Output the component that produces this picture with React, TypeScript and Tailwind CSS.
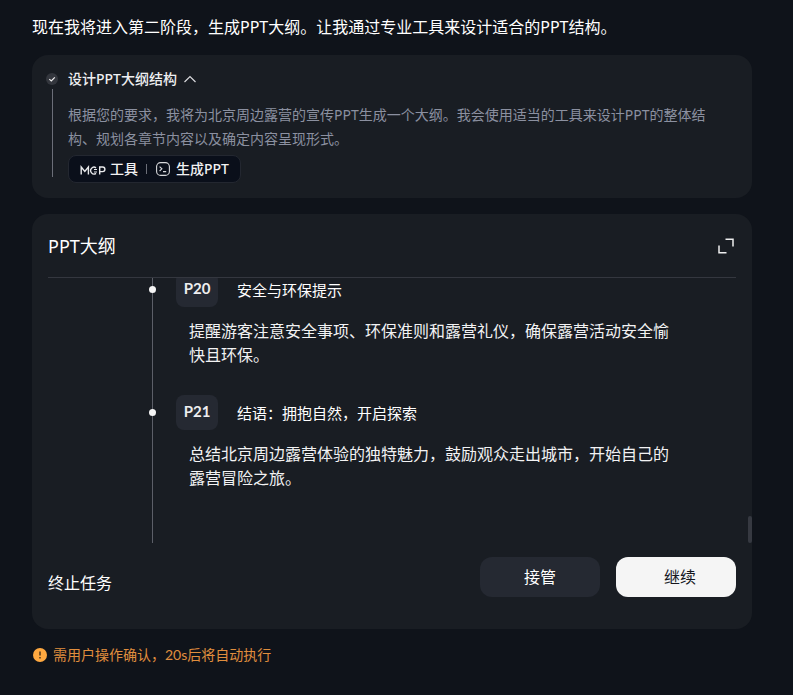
import React from "react";

type OutlinePage = { page: string; title: string; body: string };

const pages: OutlinePage[] = [
  {
    page: "P20",
    title: "安全与环保提示",
    body: "提醒游客注意安全事项、环保准则和露营礼仪，确保露营活动安全愉快且环保。",
  },
  {
    page: "P21",
    title: "结语：拥抱自然，开启探索",
    body: "总结北京周边露营体验的独特魅力，鼓励观众走出城市，开始自己的露营冒险之旅。",
  },
];

function McpLogo() {
  return (
    <svg width="26" height="10" viewBox="0 0 26 10" fill="none" stroke="#e8e9eb" strokeWidth="1.4" aria-label="MCP">
      <path d="M1.2 9.5V2L4.8 6.5L8.4 2V9.5" />
      <path d="M16 2.8A3.4 3.4 0 1 0 16 8.4" />
      <path d="M14 4.5H17M14 7H17" strokeWidth="1" />
      <path d="M19.7 9.5V2H22.6A2.1 2.1 0 0 1 22.6 6.6H19.7" />
    </svg>
  );
}

function StepCard() {
  return (
    <section className="flex gap-2.5 rounded-2xl bg-[#191d23] pt-3 pr-8 pb-[15px] pl-3.5">
      <div className="flex w-3 flex-col items-center pt-1.5">
        <svg className="shrink-0" width="12" height="12" viewBox="0 0 12 12" fill="none">
          <circle cx="6" cy="6" r="6" fill="#33363d" />
          <path d="M3.3 6.1L5.3 8L8.8 4.4" stroke="#f0f0f0" strokeWidth="1.2" />
        </svg>
        <div className="mt-1 mb-1.5 w-px flex-1 bg-[#6b6e78]" />
      </div>
      <div className="min-w-0 flex-1">
        <button type="button" className="flex h-6 items-center gap-1.5 text-sm leading-6 font-medium text-[#eeeff1]">
          设计PPT大纲结构
          <svg width="14" height="8" viewBox="0 0 14 8" fill="none" stroke="#d8d9dc" strokeWidth="1.2">
            <path d="M1.5 7L7 1.5L12.5 7" />
          </svg>
        </button>
        <p className="mt-3 text-sm leading-6 text-[#8b90a0]">
          根据您的要求，我将为北京周边露营的宣传PPT生成一个大纲。我会使用适当的工具来设计PPT的整体结构、规划各章节内容以及确定内容呈现形式。
        </p>
        <div className="mt-1 flex h-7 w-fit items-center rounded-lg border border-[#232730] bg-[#0a0f1a] px-[11px] text-sm font-medium text-[#f2f2f3]">
          <span className="pt-0.5">
            <McpLogo />
          </span>
          <span className="ml-1">工具</span>
          <span className="mx-2 h-2.5 w-px bg-[#6b6e78]" />
          <svg className="ml-px" width="14" height="14" viewBox="0 0 14 14" fill="none" stroke="#d8d9dc" strokeWidth="1.1">
            <rect x="0.6" y="0.6" width="12.8" height="12.8" rx="4" />
            <path d="M3.6 4.6L5.9 6.8L3.6 9M7 9.6H10.2" />
          </svg>
          <span className="ml-1.5">生成PPT</span>
        </div>
      </div>
    </section>
  );
}

function OutlineItem({ item }: { item: OutlinePage }) {
  return (
    <li className="flex">
      <div className="flex h-[35px] w-[7px] shrink-0 items-center">
        <span className="size-[7px] rounded-full bg-[#f5f5f5]" />
      </div>
      <div className="ml-5 min-w-0">
        <div className="flex items-center gap-[19px]">
          <span className="flex h-[35px] w-[42px] items-center justify-center rounded-lg bg-[#252932] pb-0.5 font-[Lato,'Noto_Sans_CJK_SC',sans-serif] text-[15px] font-bold text-[#eeeeef]">
            {item.page}
          </span>
          <h3 className="text-[15px] leading-6 text-white">{item.title}</h3>
        </div>
        <p className="mt-3 pl-[13px] text-base leading-6 text-[#f2f2f3]">{item.body}</p>
      </div>
    </li>
  );
}

function OutlineCard() {
  return (
    <section className="relative rounded-2xl bg-[#191d23] px-4 pb-8">
      <header className="flex h-16 items-center justify-between border-b border-[#34373f]">
        <h2 className="text-lg text-white">PPT大纲</h2>
        <button type="button" aria-label="展开" className="mr-0.5">
          <svg width="16" height="16" viewBox="0 0 16 16" fill="none" stroke="#eeeeef" strokeWidth="1.5">
            <path d="M7.5 1.2H15V8.5M1 7.5V14.8H8.5" />
          </svg>
        </button>
      </header>
      <div className="relative flex h-[265px] flex-col justify-end overflow-hidden">
        <div className="absolute inset-y-0 left-[104px] w-px bg-[#5c5f68]" />
        <ul className="relative flex flex-col gap-7 pr-[60px] pb-[53px] pl-[101px]">
          {pages.map((item) => (
            <OutlineItem key={item.page} item={item} />
          ))}
        </ul>
      </div>
      <div className="absolute top-[302px] right-0 h-[27px] w-1 rounded-sm bg-[#363941]" />
      <footer className="mt-3.5 flex h-10 items-center gap-4">
        <button type="button" className="mt-3 mr-auto text-base text-white">
          终止任务
        </button>
        <button type="button" className="h-10 w-[120px] rounded-xl bg-[#252932] text-base text-white">
          接管
        </button>
        <button type="button" className="h-10 w-[120px] rounded-xl bg-[#f5f5f5] pl-2 text-base text-[#14171e]">
          继续
        </button>
      </footer>
    </section>
  );
}

export default function App() {
  return (
    <main className="flex min-h-screen flex-col gap-4 bg-[#0f131a] pt-[15px] pr-[41px] pl-8 font-['Noto_Sans','Noto_Sans_CJK_SC',sans-serif]">
      <p className="text-base leading-6 text-white">
        现在我将进入第二阶段，生成PPT大纲。让我通过专业工具来设计适合的PPT结构。
      </p>
      <StepCard />
      <OutlineCard />
      <p role="status" className="flex items-center gap-1.5 px-px font-[Lato,'Noto_Sans_CJK_SC',sans-serif] text-sm text-[#e08e3e]">
        <svg width="14" height="14" viewBox="0 0 14 14">
          <circle cx="7" cy="7" r="7" fill="#ffa940" />
          <path d="M7 3.4V7.6M7 9V10.6" stroke="#5a3d1c" strokeWidth="1.6" />
        </svg>
        需用户操作确认，20s后将自动执行
      </p>
    </main>
  );
}
